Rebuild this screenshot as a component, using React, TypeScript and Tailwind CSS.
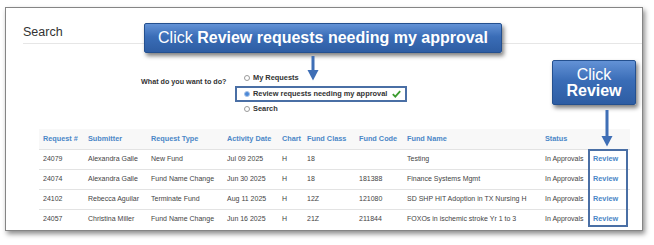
import React from "react";

const cols = "grid grid-cols-[45px_63px_76px_55px_25px_52px_48px_138px_48px_41px]";

const rows = [
  ["24079", "Alexandra Galle", "New Fund", "Jul 09 2025", "H", "18", "", "Testing", "In Approvals"],
  ["24074", "Alexandra Galle", "Fund Name Change", "Jun 30 2025", "H", "18", "181388", "Finance Systems Mgmt", "In Approvals"],
  ["24102", "Rebecca Aguilar", "Terminate Fund", "Aug 11 2025", "H", "12Z", "121080", "SD SHP HIT Adoption in TX Nursing H", "In Approvals"],
  ["24057", "Christina Miller", "Fund Name Change", "Jun 16 2025", "H", "21Z", "211844", "FOXOs in ischemic stroke Yr 1 to 3", "In Approvals"],
];

const headers = ["Request #", "Submitter", "Request Type", "Activity Date", "Chart", "Fund Class", "Fund Code", "Fund Name", "Status", ""];

function Radio({ checked }: { checked?: boolean }) {
  return checked ? (
    <span className="w-[6px] h-[6px] rounded-full bg-[#4a88d8] border border-[#a9c3e6] shrink-0" />
  ) : (
    <span className="w-[6px] h-[6px] rounded-full bg-white border border-[#9a9a9a] shrink-0" />
  );
}

export default function App() {
  return (
    <div className="relative w-[654px] h-[245px] bg-white overflow-hidden font-['Liberation_Sans',Arial,sans-serif]">
      <div className="ml-[5px] mt-[7px] w-[638px] h-[224px] border border-[#858585] bg-white shadow-[2px_3px_5px_rgba(0,0,0,0.45)]">
        <div className="ml-[17px] pt-[16px] pb-[3px] border-b border-[#e6e6e6]">
          <div className="text-[12.5px] leading-[16px] text-[#333]">Search</div>
        </div>

        <div className="flex mt-[26px] ml-[135px]">
          <div className="w-[103px] pt-[4px] text-[7.2px] leading-[16px] font-bold text-[#333]">What do you want to do?</div>
          <div className="flex flex-col text-[7.4px] font-bold text-[#333]">
            <div className="h-[16px] flex items-center gap-[3px]">
              <Radio />
              <span>My Requests</span>
            </div>
            <div className="h-[16px] w-[172px] -ml-[9px] pl-[7px] border-2 border-[#4a6fa5] flex items-center gap-[3px]">
              <Radio checked />
              <span>Review requests needing my approval</span>
              <svg width="9" height="8" viewBox="0 0 9 8" className="ml-[2px]">
                <path d="M0.8 4.2 L3.3 6.6 L8.2 1.2" stroke="#3c9c2f" strokeWidth="1.8" fill="none" />
              </svg>
            </div>
            <div className="h-[14px] flex items-center gap-[3px]">
              <Radio />
              <span>Search</span>
            </div>
          </div>
        </div>

        <div className="relative mt-[13px] ml-[33px] w-[591px]">
          <div className={`${cols} h-[20px] items-center bg-[#f8f8f8] text-[7.3px] font-bold text-[#4b87c7]`}>
            {headers.map((h, i) => (
              <div key={i} className="pl-[4px] whitespace-nowrap text-[#4b87c7]">{h}</div>
            ))}
          </div>
          {rows.map((r, ri) => (
            <div key={ri} className={`${cols} h-[20px] items-center border-t border-[#e3e3e3] text-[7px]`}>
              {r.map((c, ci) => (
                <div key={ci} className="pl-[4px] whitespace-nowrap overflow-hidden text-[#444444]">{c}</div>
              ))}
              <div className="pl-[4px] text-[7.3px] font-bold text-[#4b87c7]">Review</div>
            </div>
          ))}
          <div className="absolute left-[549px] top-[20px] w-[40px] h-[78px] border-2 border-[#4a6fa5]" />
        </div>
      </div>

      {/* Callout 1 */}
      <div className="absolute left-[144px] top-[23px] w-[358px] h-[30px] flex items-center justify-center rounded-[2px] border border-[#24508f] bg-[linear-gradient(to_bottom,#6392d6,#3a6db7_45%,#2e5da3)] shadow-[2px_3px_4px_rgba(0,0,0,0.5)] text-white text-[16px] leading-[18px]">
        <span>Click&nbsp;</span>
        <span className="font-bold">Review requests needing my approval</span>
      </div>
      <svg className="absolute left-[307px] top-[56px]" width="12" height="25" viewBox="0 0 12 25">
        <rect x="4.5" y="0" width="3" height="15" fill="#3f6fb6" />
        <polygon points="0.5,14 11.5,14 6,24.5" fill="#3f6fb6" />
      </svg>

      {/* Callout 2 */}
      <div className="absolute left-[552px] top-[60px] w-[84px] h-[45px] flex flex-col items-center justify-center rounded-[2px] border border-[#24508f] bg-[linear-gradient(to_bottom,#6392d6,#3a6db7_45%,#2e5da3)] shadow-[2px_3px_4px_rgba(0,0,0,0.5)] text-white text-[16px] leading-[16px]">
        <span>Click</span>
        <span className="font-bold">Review</span>
      </div>
      <svg className="absolute left-[601px] top-[110px]" width="12" height="37" viewBox="0 0 12 37">
        <rect x="4.5" y="0" width="3" height="27" fill="#3f6fb6" />
        <polygon points="0.5,26 11.5,26 6,36.5" fill="#3f6fb6" />
      </svg>
    </div>
  );
}
